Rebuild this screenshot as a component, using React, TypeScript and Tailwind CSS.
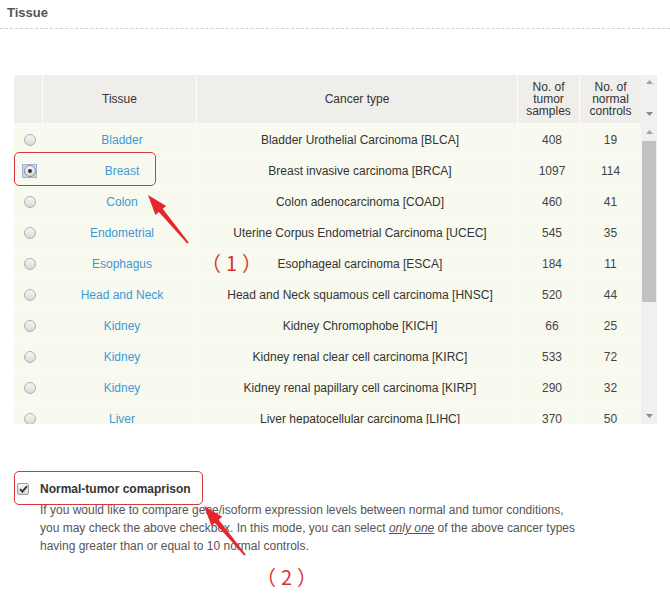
import React from "react";

const rows: [string, string, string, string][] = [
  ["Bladder", "Bladder Urothelial Carcinoma [BLCA]", "408", "19"],
  ["Breast", "Breast invasive carcinoma [BRCA]", "1097", "114"],
  ["Colon", "Colon adenocarcinoma [COAD]", "460", "41"],
  ["Endometrial", "Uterine Corpus Endometrial Carcinoma [UCEC]", "545", "35"],
  ["Esophagus", "Esophageal carcinoma [ESCA]", "184", "11"],
  ["Head and Neck", "Head and Neck squamous cell carcinoma [HNSC]", "520", "44"],
  ["Kidney", "Kidney Chromophobe [KICH]", "66", "25"],
  ["Kidney", "Kidney renal clear cell carcinoma [KIRC]", "533", "72"],
  ["Kidney", "Kidney renal papillary cell carcinoma [KIRP]", "290", "32"],
  ["Liver", "Liver hepatocellular carcinoma [LIHC]", "370", "50"],
];

function Radio({ checked }: { checked?: boolean }) {
  if (checked) {
    return (
      <span className="flex h-[14px] w-[15px] items-center justify-center bg-[#c9d7ec] border border-[#9bb5dc]">
        <span className="flex h-[12px] w-[12px] items-center justify-center rounded-full border border-[#8d8d8d] bg-gradient-to-b from-[#f6f6f6] to-[#d6d6d6]">
          <span className="h-[4px] w-[4px] rounded-full bg-[#333]" />
        </span>
      </span>
    );
  }
  return (
    <span className="block h-[12px] w-[12px] rounded-full border border-[#b0b0b0] bg-gradient-to-b from-[#f7f7f7] to-[#d9d9d9]" />
  );
}

function UpArrow() {
  return (
    <svg width="7" height="4" viewBox="0 0 7 4">
      <polygon points="3.5,0 7,4 0,4" fill="#a3a3a3" />
    </svg>
  );
}
function DownArrow() {
  return (
    <svg width="7" height="4" viewBox="0 0 7 4">
      <polygon points="0,0 7,0 3.5,4" fill="#8a8a8a" />
    </svg>
  );
}

export default function App() {
  return (
    <div className="relative w-[670px] h-[597px] overflow-hidden bg-white font-['Liberation_Sans',Arial,sans-serif] text-[12px] text-[#333]">
      <div className="h-[29px] px-[7px] pt-[5px] text-[13px] leading-[16px] font-bold text-[#555] border-b border-dashed border-[#d0d0d0]">
        Tissue
      </div>

      <div className="ml-[14px] mt-[46px] w-[643px]">
        {/* header */}
        <div className="flex h-[48px]">
          <div className="grid w-[627px] grid-cols-[29px_154px_321px_62px_61px] rounded-tl-[4px] bg-[#efeeea] text-[#333]">
            <div className="border-r border-white" />
            <div className="flex items-center justify-center border-r border-white">Tissue</div>
            <div className="flex items-center justify-center border-r border-white">Cancer type</div>
            <div className="flex items-center justify-center border-r border-white text-center leading-[12px]">
              No. of
              <br />
              tumor
              <br />
              samples
            </div>
            <div className="flex items-center justify-center text-center leading-[12px]">
              No. of
              <br />
              normal
              <br />
              controls
            </div>
          </div>
          <div className="flex w-[16px] flex-col items-center justify-between bg-[#f1f1f1] pt-[5px] pb-[7px]">
            <UpArrow />
            <DownArrow />
          </div>
        </div>

        {/* body */}
        <div className="flex h-[301px]">
          <div className="w-[627px] overflow-hidden bg-[#f8faf0] pt-[2px]">
            {rows.map((r, i) => (
              <div
                key={i}
                className="grid h-[31px] grid-cols-[29px_154px_321px_62px_61px] border-b border-[#fdfdf8]"
              >
                <div className="flex items-center justify-center pl-[2px]">
                  <Radio checked={i === 1} />
                </div>
                <div className="flex items-center justify-center border-r border-[#fdfdf8] pl-[5px] text-[#3d98d6]">
                  {r[0]}
                </div>
                <div className="flex items-center justify-center border-r border-[#fdfdf8] pl-[6px]">{r[1]}</div>
                <div className="flex items-center justify-center border-r border-[#fdfdf8] pl-[7px] text-[#444]">{r[2]}</div>
                <div className="flex items-center justify-center text-[#444]">{r[3]}</div>
              </div>
            ))}
          </div>
          <div className="flex w-[16px] flex-col bg-[#f0f0f0]">
            <div className="flex h-[17px] items-center justify-center">
              <UpArrow />
            </div>
            <div className="mx-auto mt-[1px] h-[161px] w-[14px] bg-[#c1c1c1]" />
            <div className="flex-1" />
            <div className="flex h-[17px] items-center justify-center">
              <DownArrow />
            </div>
          </div>
        </div>
      </div>

      {/* checkbox section */}
      <div className="mt-[55px]">
        <div className="flex h-[20px] items-center">
          <span className="ml-[17px] flex h-[12px] w-[12px] items-center justify-center rounded-[2px] border border-[#a0a0a0] bg-gradient-to-b from-[#f8f8f8] to-[#d8d8d8]">
            <svg width="9" height="8" viewBox="0 0 9 8">
              <path d="M1 4.2 L3.4 6.6 L8 1.2" stroke="#333" strokeWidth="1.8" fill="none" />
            </svg>
          </span>
          <span className="ml-[11px] font-bold text-[#333]">Normal-tumor comaprison</span>
        </div>
        <div className="mt-[2px] pl-[40px] leading-[18px] text-[#555]">
          If you would like to compare gene/isoform expression levels between normal and tumor conditions,
          <br />
          you may check the above checkbox. In this mode, you can select{" "}
          <span className="italic underline">only one</span> of the above cancer types
          <br />
          having greater than or equal to 10 normal controls.
        </div>
      </div>

      {/* annotations */}
      <div className="absolute left-[14px] top-[152px] h-[34px] w-[142px] rounded-[5px] border-[1.5px] border-[#d6383d]" />
      <div className="absolute left-[14px] top-[471px] h-[34px] w-[189px] rounded-[5px] border-[1.5px] border-[#d6383d]" />
      <svg className="absolute left-0 top-0" width="670" height="597" viewBox="0 0 670 597">
        <polygon
          points="148,195 166.2,205.9 162.7,208.8 188.8,242.4 187.2,243.6 158.9,212.0 155.4,214.9"
          fill="#e5262b"
        />
        <polygon
          points="204,506 222.2,516.8 218.7,519.7 245.8,554.4 244.2,555.6 214.9,522.9 211.4,525.8"
          fill="#e5262b"
        />
      </svg>
      <div className="absolute left-[201px] top-[249px] text-[20px] leading-[28px] tracking-[5px] text-[#d8322f] font-['Noto_Sans_CJK_SC',sans-serif]">
        （1）
      </div>
      <div className="absolute left-[256px] top-[563px] text-[20px] leading-[28px] tracking-[5px] text-[#d8322f] font-['Noto_Sans_CJK_SC',sans-serif]">
        （2）
      </div>
    </div>
  );
}
